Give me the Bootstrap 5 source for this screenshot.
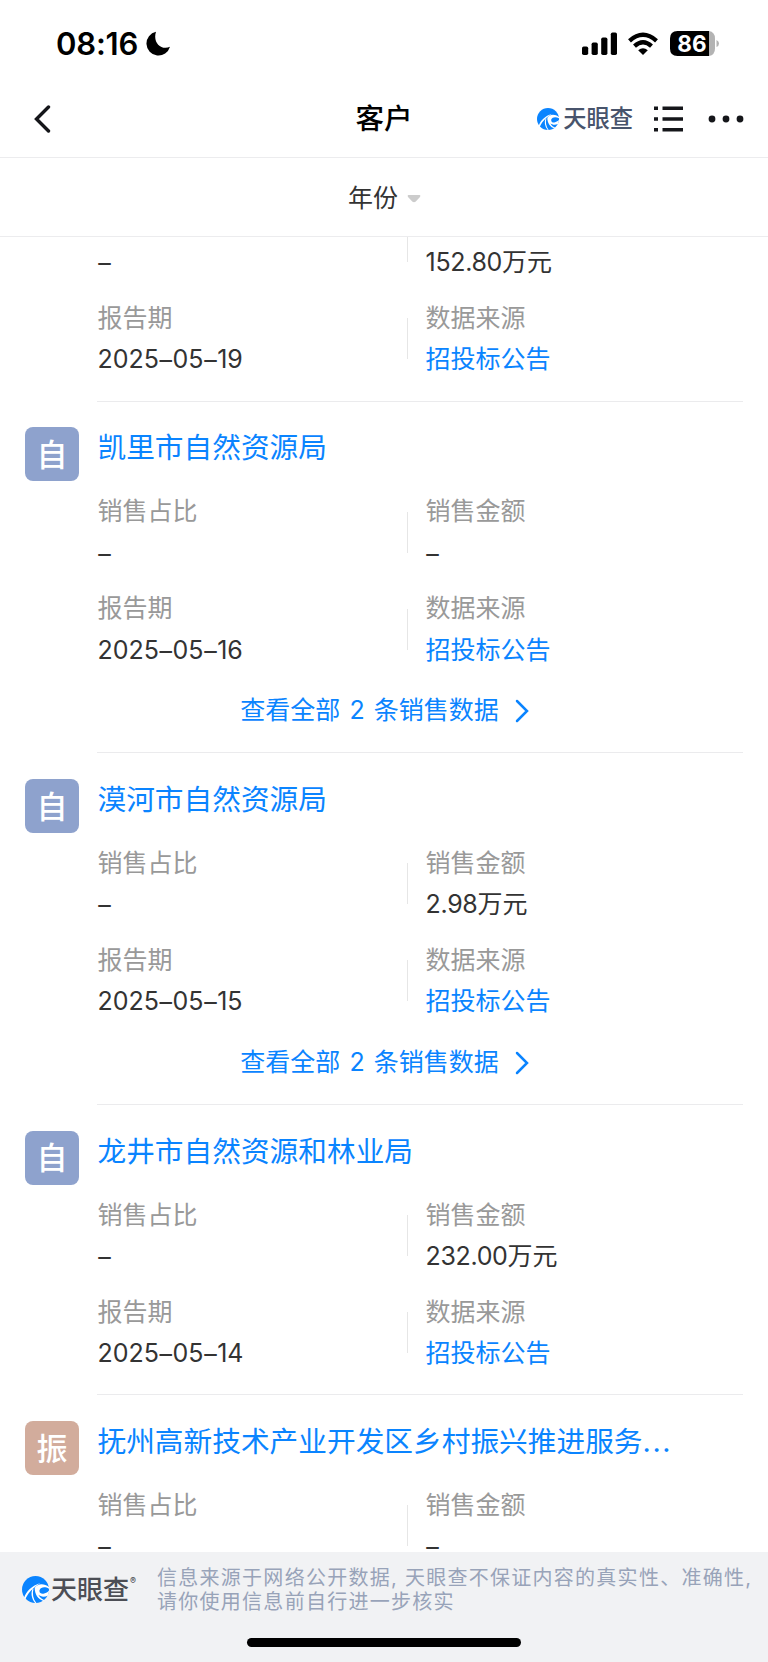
<!DOCTYPE html>
<html lang="zh-CN">
<head>
<meta charset="utf-8">
<meta name="viewport" content="width=device-width, initial-scale=1">
<title>客户</title>
<link href="https://cdn.jsdelivr.net/npm/bootstrap@5.3.0/dist/css/bootstrap.min.css" rel="stylesheet">
<style>
  body{font-family:Inter,"Noto Sans CJK SC",sans-serif;font-size:25px;color:#333;background:#fff;width:768px;height:1662px;overflow:hidden}
  svg{display:block;flex:none}
  .status{height:80px;padding:7px 49px 0 56px}
  .clock{font-size:31px;font-weight:600;color:#000;letter-spacing:-.2px;line-height:72px}
  .topbar{height:78px;border-bottom:1.5px solid #ececee;padding:0 25px}
  .page-title{font-size:28.5px;font-weight:500;color:#000;line-height:78px}
  .side{flex:1 1 0}
  .brand-text{font-weight:500;color:#48546c;white-space:nowrap}
  .filter{height:79px;border-bottom:1.5px solid #ececee;padding:3px 0 0 1px}
  .list{height:1315px;overflow:hidden}
  .item{padding-left:25px;height:290.3px}
  .item.has-more{height:351.7px}
  .avatar{width:54px;height:54px;border-radius:8px;background:#8ea2cd;color:#fff;font-size:31px;font-weight:500;margin:25.5px 18px 0 0;padding-top:2px;flex:none}
  .avatar.tan{background:#d2ac9c}
  .info{width:646px;border-bottom:1.5px solid #ebebed;padding-top:25.5px}
  .name{font-size:28.7px;line-height:41px;margin-bottom:22.5px;padding-left:.5px;white-space:nowrap}
  .blue{color:#0a84ff}
  .field{line-height:41.4px;white-space:nowrap;padding:1.2px 0 0 .6px}
  .pair{height:82.8px;margin-bottom:14.3px}
  .lbl{color:#999}
  .col-l{width:310px}
  .rule{width:1px;height:41px;background:#e6e6e6;margin-right:17px}
  .num{letter-spacing:-.35px}
  .date{letter-spacing:-.03px}
  .dash{display:inline-block;padding:0 .6px;line-height:1;transform:translateY(1px)}
  .more{height:61.3px;margin-top:9.8px;padding:0 71px 0 0;word-spacing:2px}
  .foot{background:#f1f2f4;height:110px}
  .note{font-size:20px;letter-spacing:1.27px;line-height:24.5px;color:#98a3b9;white-space:nowrap;padding-top:2px}
  .foot-row{height:74px;padding-left:22px}
  .home{width:274px;height:9px;border-radius:5px;background:#000;margin-top:12px}
</style>
</head>
<body>
<svg width="0" height="0" class="position-absolute">
  <symbol id="swirl" viewBox="0 0 66 66">
    <circle cx="33" cy="33" r="33" fill="#0a84ff"/>
    <path d="M5 54C10 37 24 24 45 17C31 26 17 37 8 57Z" fill="#fff"/>
    <path d="M31 29C38 18 54 17 66 27L66 31C56 25 46 27 43 34C41 41 47 45 54 43C60 41 63 39 67 35L63 48C54 52 46 51 40 46C44 54 49 57 55 59L52 61C39 57 31 45 31 29Z" fill="#fff"/>
    <path d="M26 31C21 42 23 54 32 66L35 66C27 55 25 44 28 31Z" fill="#fff"/>
  </symbol>
</svg>

<div class="status d-flex align-items-center">
  <span class="clock">08:16</span>
  <svg class="ms-2" width="25" height="25" viewBox="0 0 25 25"><path d="M10 .8A12 12 0 1 0 24 15.800C15 19.500 6.500 11.500 10 .8Z"/></svg>
  <div class="ms-auto d-flex align-items-center">
    <svg width="36" height="24" viewBox="0 0 36 24"><rect x="0" y="14.500" width="6.200" height="8.500" rx="1.700"/><rect x="9.600" y="10.500" width="6.200" height="12.500" rx="1.700"/><rect x="19.200" y="5.500" width="6.200" height="17.500" rx="1.700"/><rect x="28.800" y=".5" width="6.200" height="22.500" rx="1.700"/></svg>
    <svg style="margin-left:10px" width="30" height="24" viewBox="0 0 30 24"><g fill="none" stroke="#000" stroke-width="4.300"><path d="M1.500 8.800Q15-3.300 28.500 8.800"/><path d="M6.500 14.200Q15 6.500 23.500 14.200"/></g><path d="M10.200 18.200Q15 14.200 19.800 18.200L15 23Z"/></svg>
    <svg style="margin-left:12px" width="49" height="25" viewBox="0 0 49 25"><path d="M39 0h-31.500Q0 0 0 7.500v10Q0 25 7.500 25H39Z"/><path d="M39 0Q45 1 45 7.500v10Q45 24 39 25Z" fill="#b3b3b3"/><path d="M46.500 9Q49 10 49 12.500T46.500 16Z" fill="#b3b3b3"/><text x="22" y="20.700" text-anchor="middle" font-family="Inter" font-weight="700" font-size="22.500" fill="#fff">86</text></svg>
  </div>
</div>

<nav class="topbar d-flex align-items-center">
  <div class="side"><svg class="ms-2" width="18" height="28" viewBox="0 0 18 28"><path d="M15.500 2L3.500 14L15.500 26" fill="none" stroke="#15161a" stroke-width="3.400" stroke-linecap="round"/></svg></div>
  <div class="page-title">客户</div>
  <div class="side d-flex align-items-center justify-content-end">
    <svg width="22" height="22"><use href="#swirl"/></svg>
    <span class="brand-text" style="font-size:23.300px;margin-left:4px;padding-top:1px">天眼查</span>
    <svg style="margin-left:21px" width="30" height="28" viewBox="0 0 30 28"><path d="M0 3.200h4M8.500 3.200H29M0 14h4M8.500 14H29M0 24.800h4M8.500 24.800H29" stroke="#15161a" stroke-width="3.600"/></svg>
    <svg style="margin:0 -1px 0 24px" width="36" height="8" viewBox="0 0 36 8"><g fill="#15161a"><circle cx="4" cy="4" r="3.400"/><circle cx="18" cy="4" r="3.400"/><circle cx="32" cy="4" r="3.400"/></g></svg>
  </div>
</nav>

<div class="filter d-flex align-items-center justify-content-center">
  <span>年份</span>
  <svg style="margin-left:9px" width="14" height="8" viewBox="0 0 14 8"><path d="M1.300 0h11.400Q14 .6 13 2L8.800 6.500Q7 8 5.200 6.500L1 2Q0 .6 1.300 0Z" fill="#ccc"/></svg>
</div>

<main class="list">
  <section class="item d-flex" style="height:164.700px;padding-left:97px">
    <div class="info" style="padding-top:0">
      <div class="d-flex" style="height:60px">
        <div class="field col-l" style="padding-top:4.500px"><span class="dash">–</span></div>
        <div class="rule" style="height:25px"></div>
        <div class="field" style="padding-top:4.500px"><span class="num">152.80</span>万元</div>
      </div>
      <div class="pair d-flex align-items-center">
        <div class="field col-l"><div class="lbl">报告期</div><div class="date">2025<span class="dash">–</span>05<span class="dash">–</span>19</div></div>
        <div class="rule"></div>
        <div class="field"><div class="lbl">数据来源</div><div class="blue">招投标公告</div></div>
      </div>
    </div>
  </section>

  <section class="item has-more d-flex">
    <div class="avatar d-flex align-items-center justify-content-center">自</div>
    <div class="info">
      <div class="name blue">凯里市自然资源局</div>
      <div class="pair d-flex align-items-center">
        <div class="field col-l"><div class="lbl">销售占比</div><div><span class="dash">–</span></div></div>
        <div class="rule"></div>
        <div class="field"><div class="lbl">销售金额</div><div><span class="dash">–</span></div></div>
      </div>
      <div class="pair d-flex align-items-center mb-0">
        <div class="field col-l"><div class="lbl">报告期</div><div class="date">2025<span class="dash">–</span>05<span class="dash">–</span>16</div></div>
        <div class="rule"></div>
        <div class="field"><div class="lbl">数据来源</div><div class="blue">招投标公告</div></div>
      </div>
      <div class="more blue d-flex align-items-center justify-content-center">
        <span>查看全部&nbsp;2&nbsp;条销售数据</span>
        <svg style="margin-left:16px" width="14" height="24" viewBox="0 0 14 24"><path d="M2 2L12 12L2 22" fill="none" stroke="#0a84ff" stroke-width="2.500" stroke-linecap="round"/></svg>
      </div>
    </div>
  </section>

  <section class="item has-more d-flex">
    <div class="avatar d-flex align-items-center justify-content-center">自</div>
    <div class="info">
      <div class="name blue">漠河市自然资源局</div>
      <div class="pair d-flex align-items-center">
        <div class="field col-l"><div class="lbl">销售占比</div><div><span class="dash">–</span></div></div>
        <div class="rule"></div>
        <div class="field"><div class="lbl">销售金额</div><div><span class="num">2.98</span>万元</div></div>
      </div>
      <div class="pair d-flex align-items-center mb-0">
        <div class="field col-l"><div class="lbl">报告期</div><div class="date">2025<span class="dash">–</span>05<span class="dash">–</span>15</div></div>
        <div class="rule"></div>
        <div class="field"><div class="lbl">数据来源</div><div class="blue">招投标公告</div></div>
      </div>
      <div class="more blue d-flex align-items-center justify-content-center">
        <span>查看全部&nbsp;2&nbsp;条销售数据</span>
        <svg style="margin-left:16px" width="14" height="24" viewBox="0 0 14 24"><path d="M2 2L12 12L2 22" fill="none" stroke="#0a84ff" stroke-width="2.500" stroke-linecap="round"/></svg>
      </div>
    </div>
  </section>

  <section class="item d-flex">
    <div class="avatar d-flex align-items-center justify-content-center">自</div>
    <div class="info">
      <div class="name blue">龙井市自然资源和林业局</div>
      <div class="pair d-flex align-items-center">
        <div class="field col-l"><div class="lbl">销售占比</div><div><span class="dash">–</span></div></div>
        <div class="rule"></div>
        <div class="field"><div class="lbl">销售金额</div><div><span class="num">232.00</span>万元</div></div>
      </div>
      <div class="pair d-flex align-items-center">
        <div class="field col-l"><div class="lbl">报告期</div><div class="date">2025<span class="dash">–</span>05<span class="dash">–</span>14</div></div>
        <div class="rule"></div>
        <div class="field"><div class="lbl">数据来源</div><div class="blue">招投标公告</div></div>
      </div>
    </div>
  </section>

  <section class="item d-flex">
    <div class="avatar tan d-flex align-items-center justify-content-center">振</div>
    <div class="info">
      <div class="name blue">抚州高新技术产业开发区乡村振兴推进服务<span style="letter-spacing:1.600px">...</span></div>
      <div class="pair d-flex align-items-center">
        <div class="field col-l"><div class="lbl">销售占比</div><div><span class="dash">–</span></div></div>
        <div class="rule"></div>
        <div class="field"><div class="lbl">销售金额</div><div><span class="dash">–</span></div></div>
      </div>
    </div>
  </section>
</main>

<footer class="foot">
  <div class="foot-row d-flex align-items-center">
    <svg width="27" height="27"><use href="#swirl"/></svg>
    <span class="brand-text" style="font-size:26px;margin-left:2px;color:#4c4e55">天眼查</span>
    <span class="align-self-start" style="font-size:9px;font-weight:600;margin:22px 0 0 1px;color:#4c4e55;width:8px">®</span>
    <div class="note" style="margin-left:19px">信息来源于网络公开数据, 天眼查不保证内容的真实性、准确性,<br>请你使用信息前自行进一步核实</div>
  </div>
  <div class="home mx-auto"></div>
</footer>
<script src="https://cdn.jsdelivr.net/npm/bootstrap@5.3.0/dist/js/bootstrap.bundle.min.js"></script>
</body>
</html>
